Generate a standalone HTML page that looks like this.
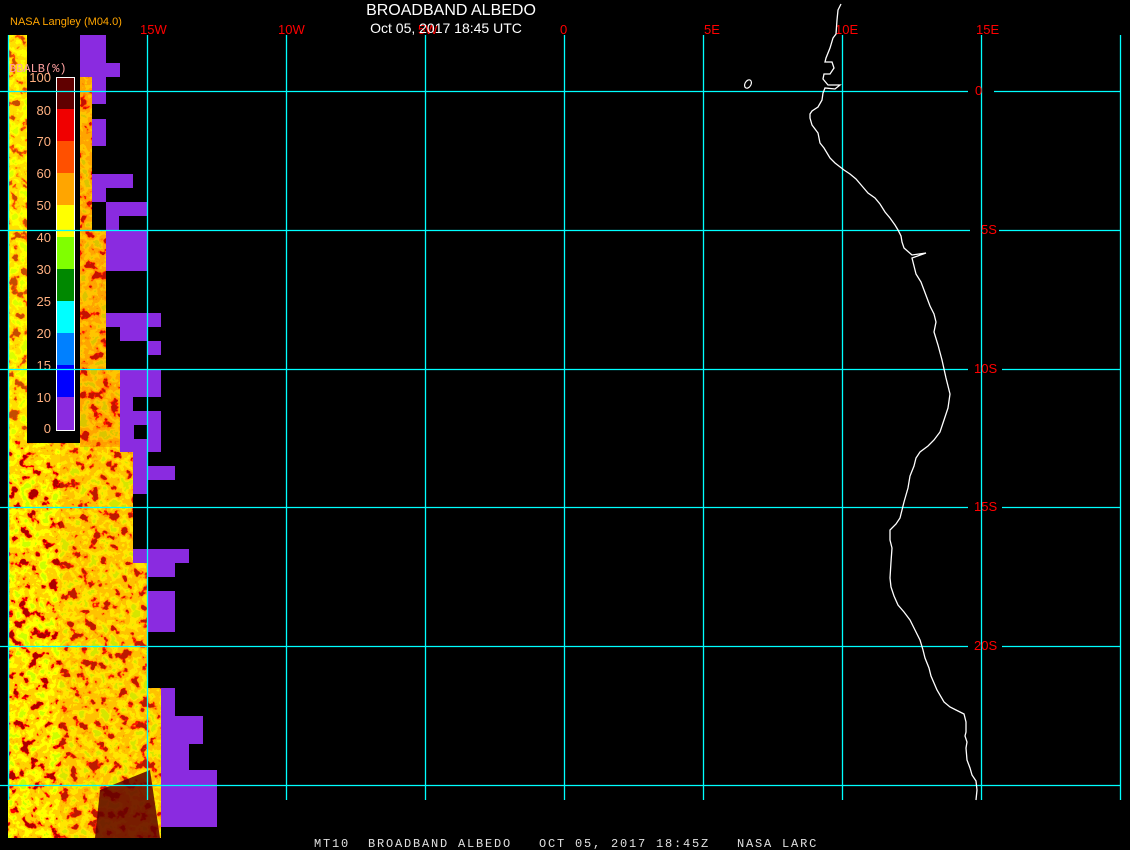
<!DOCTYPE html>
<html><head><meta charset="utf-8"><style>
html,body{margin:0;padding:0;background:#000;width:1130px;height:850px;overflow:hidden}
svg{display:block}
text{font-family:"Liberation Sans",sans-serif}
.m{font-family:"Liberation Mono",monospace;white-space:pre}
</style></head><body>
<svg width="1130" height="850" viewBox="0 0 1130 850" xmlns="http://www.w3.org/2000/svg" xml:space="preserve">
<defs>
<filter id="noise" x="0" y="0" width="230" height="850" filterUnits="userSpaceOnUse">
<feTurbulence type="fractalNoise" baseFrequency="0.1" numOctaves="3" seed="7" result="t"/>
<feColorMatrix type="matrix" values="1 0 0 0 0  1 0 0 0 0  1 0 0 0 0  0 0 0 0 1"/>
<feComponentTransfer>
<feFuncR type="linear" slope="2.2" intercept="-0.6"/>
<feFuncG type="linear" slope="2.2" intercept="-0.6"/>
<feFuncB type="linear" slope="2.2" intercept="-0.6"/>
</feComponentTransfer>
<feComponentTransfer>
<feFuncR type="discrete" tableValues="0.4 1 1 1 1 1 1 1 1 0.6"/>
<feFuncG type="discrete" tableValues="0 0 0.33 0.65 0.65 0.65 1 1 1 1"/>
<feFuncB type="discrete" tableValues="0 0 0 0 0 0 0 0 0 0"/>
<feFuncA type="table" tableValues="1 1"/>
</feComponentTransfer>
</filter>
<clipPath id="dc">
<path d="M8 35H27V443H80V77H92V230H106V313H106V369H120V440H133V563H147V688H161V838H8Z"/>
</clipPath>
</defs>
<g clip-path="url(#dc)">
<rect x="0" y="0" width="230" height="850" filter="url(#noise)"/>
<rect x="8" y="35" width="19" height="400" fill="#ffff00" opacity="0.3"/>
<rect x="80" y="77" width="70" height="370" fill="#ff4000" opacity="0.3"/>
<rect x="60" y="440" width="110" height="400" fill="#ff8000" opacity="0.2"/>
<path d="M100 790 L150 770 L160 838 L95 838 Z" fill="#600000" opacity="0.85"/>
</g>
<g fill="#8a2be0">
<rect x="80" y="35" width="26" height="28"/><rect x="80" y="63" width="40" height="14"/>
<rect x="92" y="77" width="14" height="27"/><rect x="92" y="119" width="14" height="27"/>
<rect x="92" y="174" width="41" height="14"/><rect x="92" y="188" width="14" height="14"/>
<rect x="106" y="202" width="41" height="14"/><rect x="106" y="216" width="13" height="14"/>
<rect x="106" y="230" width="41" height="41"/>
<rect x="106" y="313" width="55" height="14"/><rect x="120" y="327" width="27" height="14"/><rect x="148" y="341" width="13" height="14"/>
<rect x="120" y="369" width="41" height="28"/><rect x="120" y="397" width="13" height="14"/><rect x="120" y="411" width="41" height="14"/>
<rect x="120" y="425" width="14" height="14"/><rect x="148" y="425" width="13" height="14"/>
<rect x="120" y="439" width="41" height="13"/><rect x="133" y="452" width="14" height="42"/><rect x="147" y="466" width="28" height="14"/>
<rect x="133" y="549" width="56" height="14"/><rect x="147" y="563" width="28" height="14"/>
<rect x="147" y="591" width="28" height="41"/>
<rect x="161" y="688" width="14" height="28"/><rect x="161" y="716" width="42" height="28"/><rect x="161" y="744" width="28" height="26"/>
<rect x="161" y="770" width="56" height="57"/>
</g>
<rect x="27" y="73" width="53" height="370" fill="#000"/>
<text x="9" y="72" font-size="12" fill="#ffa0a0" class="m">BBALB(%)</text>
<g>
<rect x="57" y="77" width="17" height="32" fill="#600000"/>
<rect x="57" y="109" width="17" height="32" fill="#f00000"/>
<rect x="57" y="141" width="17" height="32" fill="#ff5000"/>
<rect x="57" y="173" width="17" height="32" fill="#ffa500"/>
<rect x="57" y="205" width="17" height="32" fill="#ffff00"/>
<rect x="57" y="237" width="17" height="32" fill="#80ff00"/>
<rect x="57" y="269" width="17" height="32" fill="#008800"/>
<rect x="57" y="301" width="17" height="32" fill="#00ffff"/>
<rect x="57" y="333" width="17" height="32" fill="#0080ff"/>
<rect x="57" y="365" width="17" height="32" fill="#0000ff"/>
<rect x="57" y="397" width="17" height="33" fill="#8a2be0"/>
<rect x="56.5" y="77.5" width="18" height="353" fill="none" stroke="#fff" stroke-width="1"/>
</g>
<g font-size="13" fill="#ffb080" text-anchor="end" class="m">
<text x="51" y="82">100</text><text x="51" y="115">80</text><text x="51" y="146">70</text>
<text x="51" y="178">60</text><text x="51" y="210">50</text><text x="51" y="242">40</text>
<text x="51" y="274">30</text><text x="51" y="306">25</text><text x="51" y="338">20</text>
<text x="51" y="370">15</text><text x="51" y="402">10</text><text x="51" y="433">0</text>
</g>
<g stroke="#00ffff" stroke-width="1.3" fill="none">
<path d="M8.5 35V800M147.5 35V800M286.5 35V800M425.5 35V800M564.5 35V800M703.5 35V800M842.5 35V800M981.5 35V800M1120.5 35V800"/>
<path d="M0 91.5H968M994 91.5H1120M0 230.5H970M999 230.5H1120M0 369.5H968M1002 369.5H1120M0 507.5H968M1002 507.5H1120M0 646.5H968M1002 646.5H1120M0 785.5H1120"/>
</g>
<g font-size="13" fill="#ff0000" class="m">
<text x="140" y="34">15W</text><text x="278" y="34">10W</text><text x="418" y="34">5W</text>
<text x="560" y="34">0</text><text x="704" y="34">5E</text><text x="835" y="34">10E</text><text x="976" y="34">15E</text>
<text x="975" y="95">0</text><text x="981" y="234">5S</text><text x="974" y="373">10S</text>
<text x="974" y="511">15S</text><text x="974" y="650">20S</text>
</g>
<polyline fill="none" stroke="#fff" stroke-width="1.3" points="841,4 838,10 837,20 836,34 833,38 830,48 826,58 825,62 832,62 834,68 830,74 824,74 823,79 828,85 840,85 835,89 825,88 823,93 822,100 818,107 812,111 810,114 810,118 812,125 818,133 820,143 824,148 830,158 835,163 844,170 850,174 856,179 862,186 868,193 875,198 880,204 885,212 890,218 895,225 898,230 901,236 902,242 904,248 912,255 926,253 912,258 914,266 916,274 921,282 924,290 927,298 930,306 934,314 936,322 934,332 938,345 942,360 946,378 950,394 948,408 944,420 940,432 934,440 928,446 920,452 916,458 914,466 910,476 908,488 904,502 902,510 900,518 896,524 890,530 890,540 892,548 891,562 890,578 891,587 894,596 898,605 904,612 910,620 915,630 920,640 923,650 925,658 929,668 931,676 937,690 944,702 950,707 956,710 964,714 966,722 966,732 965,736 967,742 966,748 967,760 970,768 972,775 976,781 977,790 976,800"/>
<ellipse cx="748" cy="84" rx="3" ry="4.5" transform="rotate(30 748 84)" fill="none" stroke="#fff" stroke-width="1.2"/>
<text x="10" y="25" font-size="11" fill="#ffa500">NASA Langley (M04.0)</text>
<text x="451" y="15" font-size="16" fill="#fff" text-anchor="middle">BROADBAND ALBEDO</text>
<text x="446" y="33" font-size="14" fill="#fff" text-anchor="middle">Oct 05, 2017 18:45 UTC</text>
<text x="314" y="847" font-size="12" fill="#e0e0e0" class="m" letter-spacing="1.8">MT10  BROADBAND ALBEDO   OCT 05, 2017 18:45Z   NASA LARC</text>
</svg>
</body></html>
